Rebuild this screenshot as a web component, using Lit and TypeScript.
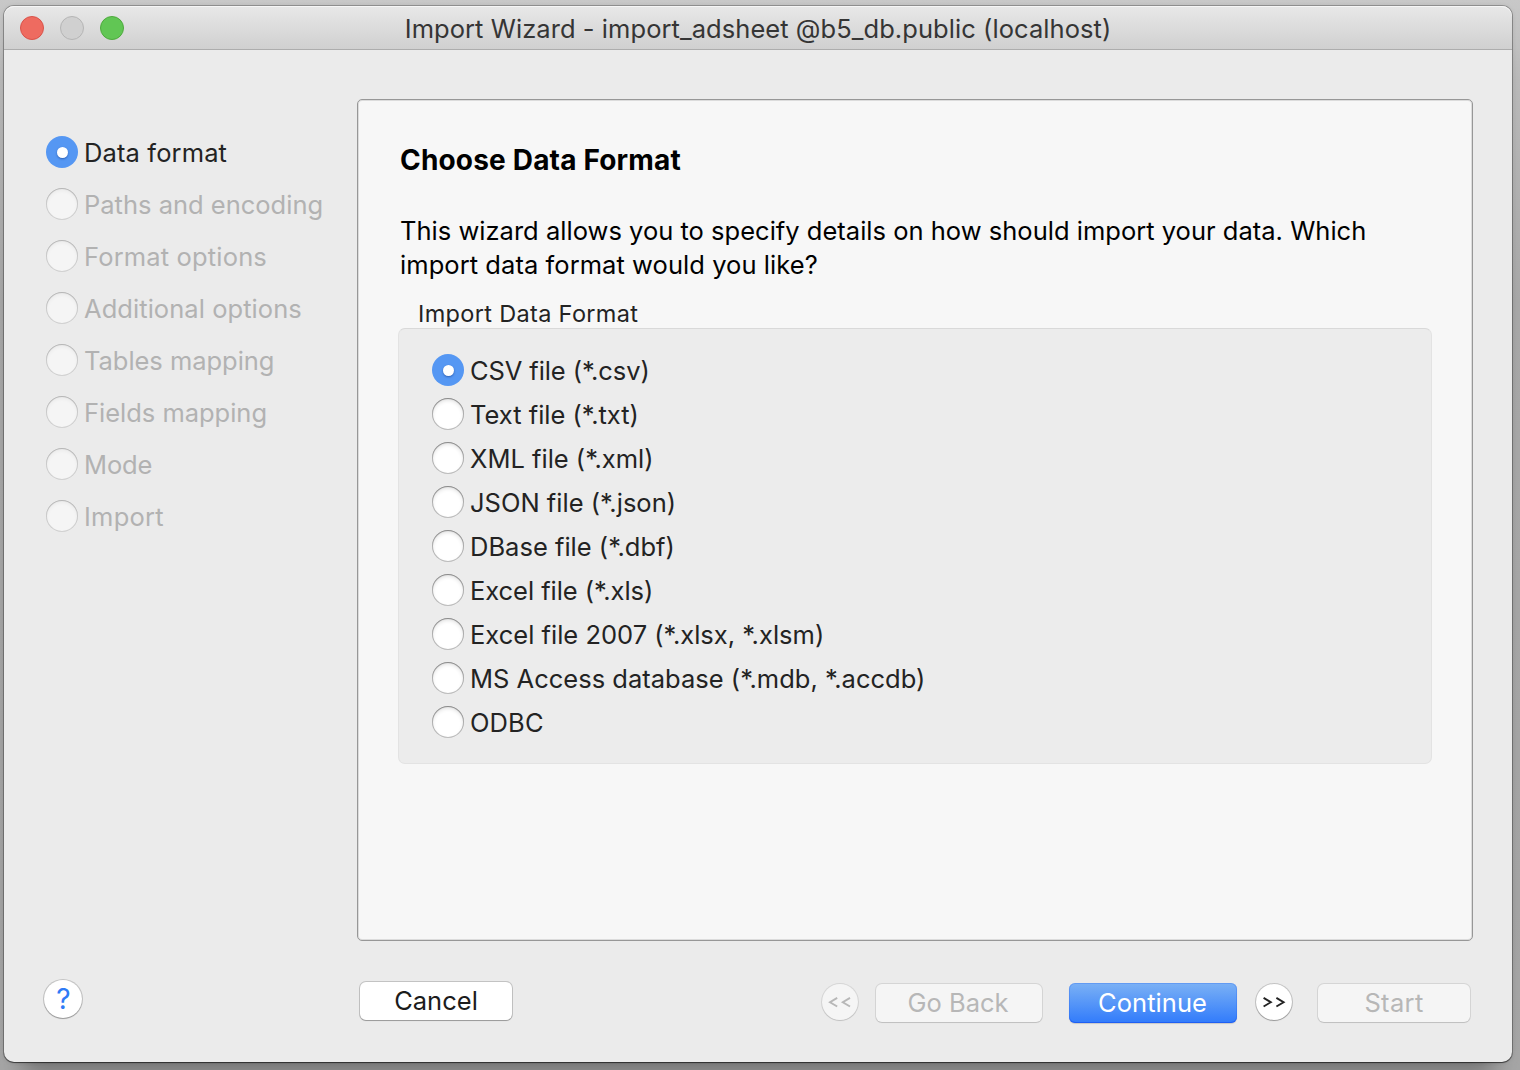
import { LitElement, html, css } from "lit";
import { customElement, property, state } from "lit/decorators.js";
import { classMap } from "lit/directives/class-map.js";
import { styleMap } from "lit/directives/style-map.js";

interface Option {
  text: string;
  /** letter spacing in px */
  track: number;
}

const STEPS: Option[] = [
  { text: "Data format", track: 0.13 },
  { text: "Paths and encoding", track: 0 },
  { text: "Format options", track: 0.16 },
  { text: "Additional options", track: 0.06 },
  { text: "Tables mapping", track: -0.04 },
  { text: "Fields mapping", track: -0.02 },
  { text: "Mode", track: -0.15 },
  { text: "Import", track: 0.25 },
];

const FORMATS: Option[] = [
  { text: "CSV file (*.csv)", track: -0.1 },
  { text: "Text file (*.txt)", track: 0 },
  { text: "XML file (*.xml)", track: 0 },
  { text: "JSON file (*.json)", track: 0.01 },
  { text: "DBase file (*.dbf)", track: 0.01 },
  { text: "Excel file (*.xls)", track: -0.05 },
  { text: "Excel file 2007 (*.xlsx, *.xlsm)", track: 0.01 },
  { text: "MS Access database (*.mdb, *.accdb)", track: 0.01 },
  { text: "ODBC", track: 0.1 },
];

@customElement("wizard-radio")
export class WizardRadio extends LitElement {
  @property() label = "";
  @property({ type: Number }) track = 0;
  @property({ type: Boolean }) checked = false;
  @property({ type: Boolean }) disabled = false;

  static styles = css`
    :host {
      display: flex;
      align-items: center;
      height: 32px;
      gap: 6px;
    }
    .dot {
      flex: none;
      box-sizing: border-box;
      width: 32px;
      height: 32px;
      border-radius: 50%;
      background: #fff;
      box-shadow: inset 0 0 0 1px rgba(0, 0, 0, 0.25), inset 0 1px 1px rgba(0, 0, 0, 0.2),
        inset 0 2px 4px rgba(0, 0, 0, 0.14);
    }
    .dot.disabled {
      background: #f5f5f5;
      box-shadow: inset 0 0 0 1px rgba(0, 0, 0, 0.14), inset 0 1px 1px rgba(0, 0, 0, 0.1),
        inset 0 2px 4px rgba(0, 0, 0, 0.06);
    }
    .dot.checked {
      display: grid;
      place-items: center;
      background: #5597f3;
      box-shadow: none;
    }
    .pip {
      width: 11px;
      height: 11px;
      border-radius: 50%;
      background: #fff;
      box-shadow: 0 1px 2px rgba(20, 60, 140, 0.6);
    }
    .label {
      padding-top: 2px;
      line-height: 32px;
      white-space: nowrap;
      color: #232323;
    }
    .label.disabled {
      color: #b2b2b2;
    }
  `;

  render() {
    const dot = { dot: true, checked: this.checked, disabled: this.disabled };
    const label = { label: true, disabled: this.disabled };
    return html`
      <span class=${classMap(dot)}>${this.checked ? html`<span class="pip"></span>` : null}</span>
      <span class=${classMap(label)} style=${styleMap({ letterSpacing: `${this.track}px` })}
        >${this.label}</span
      >
    `;
  }
}

@customElement("app-root")
export class AppRoot extends LitElement {
  @state() private format = 0;

  static styles = css`
    :host {
      display: block;
      box-sizing: border-box;
      width: 1520px;
      height: 1070px;
      padding: 6px 8px 8px 4px;
      overflow: hidden;
      background: linear-gradient(#c8c8c8 0, #bababa 80px, #a8a8a8 300px, #a4a4a4 900px, #a6a6a6 100%);
      font-family: Inter, "Liberation Sans", sans-serif;
      font-size: 25.5px;
      color: #232323;
    }
    .window {
      display: flex;
      flex-direction: column;
      box-sizing: border-box;
      height: 1056px;
      border-radius: 10px;
      background: #ebebeb;
      box-shadow: 0 0 0 1px rgba(0, 0, 0, 0.25), 0 1px 1px rgba(0, 0, 0, 0.45),
        0 0 5px rgba(0, 0, 0, 0.1), 0 30px 24px -18px rgba(0, 0, 0, 0.32);
    }
    .titlebar {
      display: grid;
      grid-template-columns: 120px 1fr 120px;
      align-items: center;
      box-sizing: border-box;
      height: 44px;
      padding-left: 16px;
      border-bottom: 1px solid #adadad;
      border-radius: 10px 10px 0 0;
      background: linear-gradient(#e8e8e8, #d0d0d0);
      box-shadow: inset 0 1px 0 #f6f6f6;
    }
    .lights {
      display: flex;
      gap: 16px;
    }
    .light {
      box-sizing: border-box;
      width: 24px;
      height: 24px;
      border: 1px solid #b5b5b5;
      border-radius: 50%;
      background: #d0d0d0;
    }
    .light.close {
      border-color: #d9534a;
      background: #ee6b60;
    }
    .light.zoom {
      border-color: #4eaa3d;
      background: #61c654;
    }
    .title {
      justify-self: center;
      padding: 2px 0 0 0;
      margin-left: -16px;
      letter-spacing: 0.06px;
      white-space: nowrap;
      color: #353535;
    }
    .body {
      display: grid;
      grid-template-columns: 353px 1116px;
      padding-top: 49px;
    }
    .steps {
      display: flex;
      flex-direction: column;
      gap: 20px;
      padding: 37px 0 0 42px;
    }
    .panel {
      box-sizing: border-box;
      height: 842px;
      padding: 43px 40px 0;
      border: 1px solid #979797;
      border-radius: 5px;
      background: #f7f7f7;
      box-shadow: inset 0 0 0 1px #dcdcdc;
    }
    h1 {
      margin: 0 0 0 2px;
      font-size: 28px;
      font-weight: 700;
      line-height: 34px;
      letter-spacing: 0.18px;
      color: #000;
    }
    .intro {
      margin: 37px 0 0 2px;
      line-height: 34px;
      color: #000;
      white-space: nowrap;
    }
    .line {
      display: block;
      letter-spacing: 0.015px;
    }
    .line.second {
      letter-spacing: 0.06px;
    }
    .legend {
      margin: 18px 0 0 20px;
      height: 28px;
      font-size: 23.5px;
      line-height: 28px;
      letter-spacing: 0.33px;
    }
    .group {
      display: flex;
      flex-direction: column;
      gap: 12px;
      box-sizing: border-box;
      height: 436px;
      padding: 25px 33px;
      border: 1px solid #e3e3e3;
      border-top-color: #d9d9d9;
      border-radius: 7px;
      background: #ececec;
    }
    .footer {
      display: flex;
      align-items: flex-start;
      padding: 38px 42px 0 40px;
    }
    .button {
      display: grid;
      place-items: center;
      box-sizing: border-box;
      height: 38px;
      padding-bottom: 1px;
      border-radius: 6px;
      background: #fff;
      box-shadow: 0 0 0 1px rgba(0, 0, 0, 0.17), 0 1px 1px rgba(0, 0, 0, 0.22);
      white-space: nowrap;
    }
    .button.disabled {
      background: #f5f5f5;
      box-shadow: 0 0 0 1px rgba(0, 0, 0, 0.09), 0 1px 1px rgba(0, 0, 0, 0.1);
      color: #b7b7b7;
    }
    .button.cancel {
      width: 152px;
      margin: 3px 0 0 278px;
      letter-spacing: 0.02px;
      color: #1c1c1c;
    }
    .button.back {
      width: 166px;
      margin: 5px 27px 0 18px;
      padding-right: 2px;
    }
    .button.continue {
      width: 168px;
      height: 40px;
      margin: 4px 19px 0 0;
      padding-right: 1px;
      background: linear-gradient(#7bb1f5, #317bfb);
      box-shadow: inset 0 0 0 1px rgba(28, 92, 240, 0.25), inset 0 -1px 0 rgba(20, 80, 240, 0.6),
        0 1px 1px rgba(0, 0, 0, 0.15);
      letter-spacing: 0.05px;
      color: #fff;
    }
    .button.start {
      width: 152px;
      margin: 5px 0 0 26px;
      letter-spacing: 0.35px;
    }
    .button.round {
      width: 36px;
      height: 36px;
      margin-top: 5px;
      padding: 0;
      border-radius: 50%;
    }
    .button.help {
      width: 38px;
      margin-top: 1px;
      padding: 0 0 0 1px;
      border-radius: 50%;
      font-size: 28px;
      color: #2f7bf6;
    }
    .spacer {
      flex: 1;
    }
    .chevrons {
      display: block;
      fill: none;
      stroke: currentColor;
      stroke-width: 1.9;
    }
  `;

  private pick(index: number) {
    this.format = index;
  }

  render() {
    return html`
      <div class="window">
        <div class="titlebar">
          <div class="lights">
            <span class="light close"></span>
            <span class="light"></span>
            <span class="light zoom"></span>
          </div>
          <div class="title">Import Wizard - import_adsheet @b5_db.public (localhost)</div>
        </div>
        <div class="body">
          <nav class="steps">
            ${STEPS.map(
              (s, i) => html`<wizard-radio
                .label=${s.text}
                .track=${s.track}
                ?checked=${i === 0}
                ?disabled=${i > 0}
              ></wizard-radio>`
            )}
          </nav>
          <main class="panel">
            <h1>Choose Data Format</h1>
            <p class="intro">
              <span class="line"
                >This wizard allows you to specify details on how should import your data. Which</span
              >
              <span class="line second">import data format would you like?</span>
            </p>
            <div class="legend">Import Data Format</div>
            <div class="group">
              ${FORMATS.map(
                (f, i) => html`<wizard-radio
                  .label=${f.text}
                  .track=${f.track}
                  ?checked=${i === this.format}
                  @click=${() => this.pick(i)}
                ></wizard-radio>`
              )}
            </div>
          </main>
        </div>
        <div class="footer">
          <div class="button help">?</div>
          <div class="button cancel">Cancel</div>
          <span class="spacer"></span>
          <div class="button round disabled">
            <svg class="chevrons" width="24" height="12" viewBox="0 0 24 12">
              <path d="M9.2 1.9 2 6.2l7.2 4.3M22 1.9l-7.2 4.3 7.2 4.3" />
            </svg>
          </div>
          <div class="button back disabled">Go Back</div>
          <div class="button continue">Continue</div>
          <div class="button round">
            <svg class="chevrons" width="24" height="12" viewBox="0 0 24 12">
              <path d="M1.6 1.9l7.2 4.3-7.2 4.3M14.4 1.9l7.2 4.3-7.2 4.3" />
            </svg>
          </div>
          <div class="button start disabled">Start</div>
        </div>
      </div>
    `;
  }
}
